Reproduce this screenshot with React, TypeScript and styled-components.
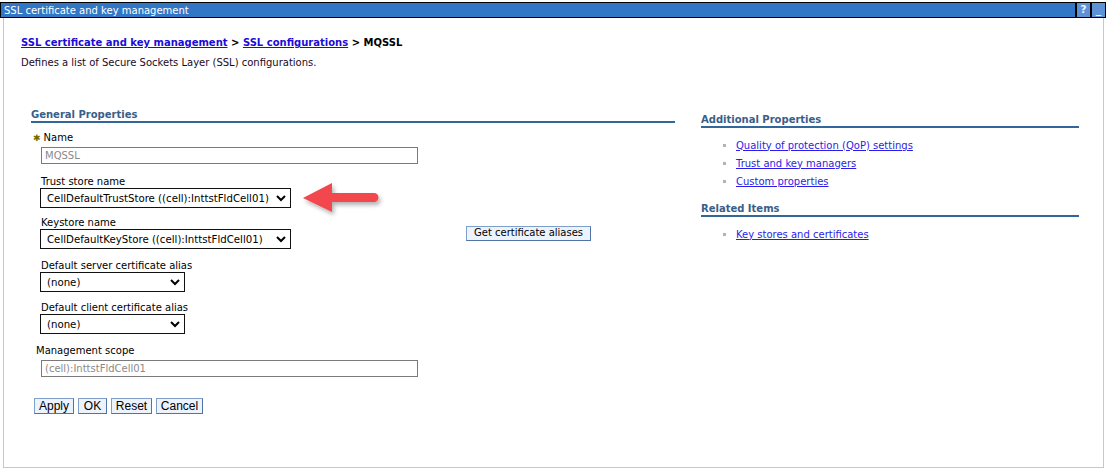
import styled, { createGlobalStyle } from 'styled-components';

const GlobalStyle = createGlobalStyle`
  html, body {
    margin: 0;
    padding: 0;
    background: #ffffff;
  }
  body {
    font-family: "DejaVu Sans", Verdana, sans-serif;
    font-size: 10px;
    color: #000000;
  }
`;

const Portlet = styled.div`
  position: relative;
  width: 1106px;
  height: 468px;
  padding-top: 2px;
  box-sizing: border-box;
  display: flex;
  flex-direction: column;
`;

const TitleBar = styled.div`
  display: flex;
  align-items: stretch;
  height: 14px;
  background: #3277c6;
  border-top: 1px solid #000;
  border-bottom: 1px solid #000;
  border-left: 1px solid #000;
`;

const TitleText = styled.div`
  flex: 1;
  color: #ffffff;
  font-size: 10px;
  line-height: 15px;
  padding-left: 3px;
  white-space: nowrap;
`;

const TitleButton = styled.div`
  width: 13px;
  background: #5d93d6;
  color: #e8f0fb;
  font-weight: bold;
  font-size: 11px;
  line-height: 14px;
  text-align: center;
  border-left: 2px solid #000;
  & + & {
    border-right: 1px solid #000;
  }
`;

const PanelBody = styled.div`
  flex: 1;
  margin: 0 2px 0 3px;
  border: 1px solid #c8c8c8;
  border-top: none;
  padding: 18px 17px 0 17px;
`;

const Breadcrumb = styled.div`
  font-weight: bold;
  line-height: 14px;
  white-space: nowrap;
`;

const CrumbLink = styled.a`
  color: #1a0dd6;
  text-decoration: underline;
`;

const Description = styled.div`
  margin-top: 6px;
  line-height: 14px;
  color: #1a0a26;
`;

const Columns = styled.div`
  display: flex;
  align-items: flex-start;
  margin-top: 38px;
  padding-left: 10px;
  gap: 26px;
`;

const MainColumn = styled.div`
  width: 644px;
`;

const SideColumn = styled.div`
  width: 378px;
  padding-top: 5px;
`;

const SectionHeading = styled.div`
  height: 13px;
  line-height: 13px;
  font-weight: bold;
  color: #3a5e87;
  border-bottom: 2px solid #336699;
  white-space: nowrap;
`;

const FieldList = styled.div`
  padding-left: 9px;
  display: flex;
  flex-direction: column;
`;

const Field = styled.div<{ $gap: number }>`
  display: flex;
  flex-direction: column;
  align-items: flex-start;
  margin-top: ${p => p.$gap}px;
`;

const Label = styled.label<{ $shift?: number }>`
  line-height: 12px;
  white-space: nowrap;
  margin-left: ${p => p.$shift ?? 1}px;
  margin-bottom: ${p => (p.$shift ? 3 : 0)}px;
`;

const Required = styled.span`
  color: #6b6b00;
  margin-left: -8px;
  margin-right: 3px;
  font-size: 9px;
`;

const TextBox = styled.div`
  box-sizing: border-box;
  width: 377px;
  height: 17px;
  margin-left: 1px;
  border: 1px solid #7a7a7a;
  color: #8a8a8a;
  padding-left: 3px;
  line-height: 15px;
`;

const Select = styled.div<{ $width: number }>`
  box-sizing: border-box;
  width: ${p => p.$width}px;
  height: 20px;
  border: 1px solid #111;
  display: flex;
  align-items: center;
  justify-content: space-between;
  padding: 0 4px 0 6px;
  font-size: 10.2px;
  color: #000;
  white-space: nowrap;
  svg {
    flex: none;
  }
`;

const FieldRow = styled.div<{ $gap: number }>`
  display: flex;
  align-items: center;
  margin-top: ${p => p.$gap}px;
`;

const FieldCell = styled.div`
  width: 426px;
  display: flex;
  flex-direction: column;
  align-items: flex-start;
`;

const PlainButton = styled.button`
  font-family: "DejaVu Sans", Verdana, sans-serif;
  font-size: 10px;
  height: 15px;
  line-height: 12px;
  padding: 0 7px;
  background: #edf3fc;
  color: #000;
  border: 1px solid #7f9fc8;
  border-right-color: #4f74a5;
  border-bottom-color: #4f74a5;
  cursor: pointer;
`;

const ButtonBar = styled.div`
  display: flex;
  gap: 4px;
  margin-top: 21px;
  padding-left: 3px;
`;

const ActionButton = styled(PlainButton)<{ $width: number }>`
  width: ${p => p.$width}px;
  height: 16px;
  padding: 0;
  font-family: "Liberation Sans Narrow", "Liberation Sans", Arial, sans-serif;
  font-size: 12px;
  line-height: 13px;
`;

const LinkList = styled.ul`
  list-style: none;
  margin: 8px 0 0 0;
  padding: 0 0 0 22px;
`;

const LinkItem = styled.li`
  display: flex;
  align-items: center;
  height: 18px;
  &::before {
    content: '';
    width: 3px;
    height: 3px;
    background: #b4b4b4;
    margin-right: 10px;
  }
`;

const SideLink = styled.a`
  color: #2a1de8;
  text-decoration: underline;
  white-space: nowrap;
`;

const SideHeading = styled(SectionHeading)<{ $gap?: number }>`
  margin-top: ${p => p.$gap ?? 0}px;
`;

const Arrow = styled.svg`
  position: absolute;
  left: 298px;
  top: 180px;
`;

const Chevron = () => (
  <svg width="10" height="8" viewBox="0 0 10 8">
    <path d="M1 2 L5 6 L9 2" fill="none" stroke="#000" strokeWidth="2" />
  </svg>
);

export default function App() {
  return (
    <Portlet>
      <GlobalStyle />
      <TitleBar>
        <TitleText>SSL certificate and key management</TitleText>
        <TitleButton>?</TitleButton>
        <TitleButton>_</TitleButton>
      </TitleBar>
      <PanelBody>
        <Breadcrumb>
          <CrumbLink href="#">SSL certificate and key management</CrumbLink> &gt;{' '}
          <CrumbLink href="#">SSL configurations</CrumbLink> &gt; MQSSL
        </Breadcrumb>
        <Description>Defines a list of Secure Sockets Layer (SSL) configurations.</Description>
        <Columns>
          <MainColumn>
            <SectionHeading>General Properties</SectionHeading>
            <FieldList>
              <Field $gap={9}>
                <Label $shift={1}>
                  <Required>✱</Required>Name
                </Label>
                <TextBox>MQSSL</TextBox>
              </Field>
              <Field $gap={12}>
                <Label>Trust store name</Label>
                <Select $width={251}>
                  CellDefaultTrustStore ((cell):InttstFldCell01) <Chevron />
                </Select>
              </Field>
              <FieldRow $gap={9}>
                <FieldCell>
                  <Label>Keystore name</Label>
                  <Select $width={251}>
                    CellDefaultKeyStore ((cell):InttstFldCell01) <Chevron />
                  </Select>
                </FieldCell>
                <PlainButton>Get certificate aliases</PlainButton>
              </FieldRow>
              <Field $gap={11}>
                <Label>Default server certificate alias</Label>
                <Select $width={145}>
                  (none) <Chevron />
                </Select>
              </Field>
              <Field $gap={10}>
                <Label>Default client certificate alias</Label>
                <Select $width={145}>
                  (none) <Chevron />
                </Select>
              </Field>
              <Field $gap={11}>
                <Label $shift={-4}>Management scope</Label>
                <TextBox>(cell):InttstFldCell01</TextBox>
              </Field>
            </FieldList>
            <ButtonBar>
              <ActionButton $width={40}>Apply</ActionButton>
              <ActionButton $width={29}>OK</ActionButton>
              <ActionButton $width={41}>Reset</ActionButton>
              <ActionButton $width={47}>Cancel</ActionButton>
            </ButtonBar>
          </MainColumn>
          <SideColumn>
            <SectionHeading>Additional Properties</SectionHeading>
            <LinkList>
              <LinkItem><SideLink href="#">Quality of protection (QoP) settings</SideLink></LinkItem>
              <LinkItem><SideLink href="#">Trust and key managers</SideLink></LinkItem>
              <LinkItem><SideLink href="#">Custom properties</SideLink></LinkItem>
            </LinkList>
            <SideHeading $gap={12}>Related Items</SideHeading>
            <LinkList>
              <LinkItem><SideLink href="#">Key stores and certificates</SideLink></LinkItem>
            </LinkList>
          </SideColumn>
        </Columns>
      </PanelBody>
      <Arrow width="90" height="40" viewBox="0 0 90 40">
        <defs>
          <filter id="arrowShadow" x="-20%" y="-30%" width="140%" height="170%">
            <feDropShadow dx="2" dy="3" stdDeviation="2" floodColor="#000" floodOpacity="0.3" />
          </filter>
        </defs>
        <path
          d="M5 18 L34 3 L34 13 L76 13 A4.5 4.5 0 0 1 76 22 L34 22 L34 32 Z"
          fill="#f2464d"
          filter="url(#arrowShadow)"
        />
      </Arrow>
    </Portlet>
  );
}
